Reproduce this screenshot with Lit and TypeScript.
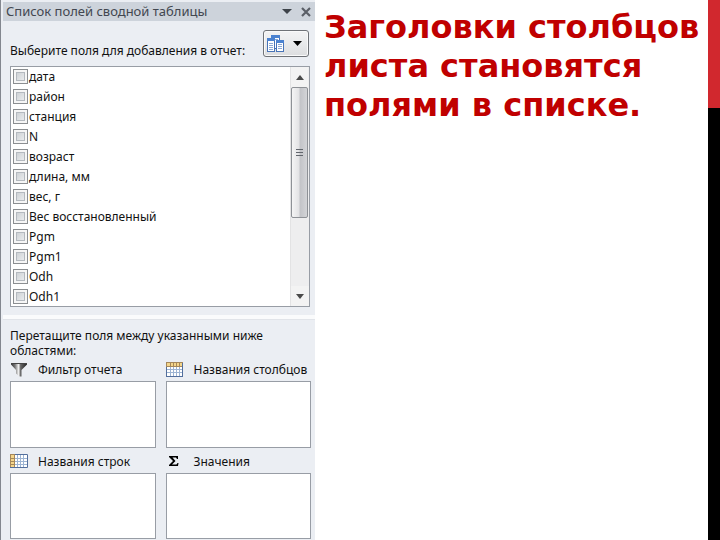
import { LitElement, html, css, svg } from "lit";
import { customElement, property } from "lit/decorators.js";

const fields = [
  "дата", "район", "станция", "N", "возраст", "длина, мм",
  "вес, г", "Вес восстановленный", "Pgm", "Pgm1", "Odh", "Odh1",
];

const areas = [
  { icon: "filter", label: "Фильтр отчета" },
  { icon: "columns", label: "Названия столбцов" },
  { icon: "rows", label: "Названия строк" },
  { icon: "sum", label: "Значения" },
];

const gridLines = svg`<path d="M4.5 1v13M7.5 1v13M10.5 1v13M13.5 1v13M1 4.5h16M1 7.5h16M1 10.5h16" stroke="#9db4d3" fill="none"/>`;

const icons: Record<string, unknown> = {
  filter: html`<svg width="18" height="15" viewBox="0 0 18 15">
    <defs><linearGradient id="f" x1="0" x2="1"><stop offset="0" stop-color="#333"/><stop offset=".25" stop-color="#777"/><stop offset=".48" stop-color="#f4f4f4"/><stop offset=".6" stop-color="#666"/><stop offset="1" stop-color="#222"/></linearGradient></defs>
    <path d="M1 1h16v1.500L11.500 8v6.500H9.500L6 11.500V8L1 2.500z" fill="url(#f)"/>
    <path d="M1 1.500h16" stroke="#444"/></svg>`,
  columns: html`<svg width="18" height="15" viewBox="0 0 18 15">
    <rect width="17" height="15" fill="#fff"/><rect width="17" height="4" fill="#f4d58a"/>${gridLines}
    <path d="M0 .5h17M.5 0v5M4.500 1v3M7.500 1v3M10.500 1v3M13.500 1v3M0 4.500h17" stroke="#a5875a" fill="none"/>
    <path d="M.5 5v10M0 14.500h17M16.500 1v14" stroke="#536f9d" fill="none"/></svg>`,
  rows: html`<svg width="18" height="14" viewBox="0 0 18 14">
    <rect width="18" height="14" fill="#fff"/><rect width="4" height="14" fill="#f4d58a"/>${gridLines}
    <path d="M.5 0v14M4.500 0v14M0 .5h5M1 4.500h3M1 7.500h3M1 10.500h3" stroke="#a5875a" fill="none"/>
    <path d="M5 .5h12.500v13H0" stroke="#536f9d" fill="none"/></svg>`,
  sum: html`<svg width="18" height="14" viewBox="0 0 18 14">
    <path d="M3 2h9v3h-1l-1-1.500H6.500L9.500 7l-3.500 3.500h4.500l1-1.500h1L12 12H3v-1l4-4-4-4z" fill="#000"/></svg>`,
};

@customElement("field-row")
export class FieldRow extends LitElement {
  @property() name = "";
  static styles = css`
    :host { display: block; }
    label { display: flex; box-sizing: border-box; height: 20px; padding-top: 2px; gap: 1px; color: #111; }
    input {
      appearance: none; flex: none; width: 15px; height: 15px; margin: 0;
      border: 1px solid #8b8e91;
      background: linear-gradient(135deg, #c3c8cd, #f4f5f6);
      box-shadow: inset 0 0 0 2px #f6f6f6, inset 0 0 0 3px #b4b9bf;
    }
    input:checked { background: #4f6f9e; }
  `;
  render() {
    return html`<label><input type="checkbox">${this.name}</label>`;
  }
}

@customElement("drop-area")
export class DropArea extends LitElement {
  @property() icon = "";
  @property() label = "";
  static styles = css`
    :host { display: flex; flex-direction: column; }
    .head { display: flex; align-items: center; gap: 10px; height: 23px; white-space: nowrap; }
    .head svg { flex: none; }
    .box { flex: 1; min-height: 64px; border: 1px solid #989da5; background: #fff; }
  `;
  render() {
    return html`<div class="head">${icons[this.icon]}<span>${this.label}</span></div><div class="box"></div>`;
  }
}

@customElement("app-root")
export class AppRoot extends LitElement {
  static styles = css`
    :host {
      display: grid; grid-template-columns: 7fr 9fr; min-height: 100vh;
      background: #fff; color: #111; font: 12px/15px "Noto Sans", sans-serif;
    }
    * { box-sizing: border-box; }
    .panel { display: flex; flex-direction: column; border-left: 1px solid #83878f; background: #ebeef3; }
    .title {
      display: flex; align-items: center; height: 19px; margin: 2px 0 0 2px; padding: 0 0 0 3px;
      background: #cdd3db; color: #424750;
    }
    .title h2 { flex: 1; margin: 0; font-size: 13px; font-weight: 400; white-space: nowrap; }
    button { font: inherit; cursor: pointer; }
    .plain { display: flex; align-items: center; justify-content: center; width: 20px; height: 18px; padding: 0; border: 0; background: none; }
    .plain:last-child { width: 18px; }
    .choose { display: flex; align-items: flex-start; justify-content: space-between; padding: 9px 6px 8px 9px; }
    .choose p { margin: 13px 0 0; white-space: nowrap; }
    .layout {
      display: flex; align-items: center; justify-content: space-between; flex: none; width: 46px; height: 27px; padding: 0 6px 0 3px;
      border: 1px solid #6f7277; border-radius: 3px; background: linear-gradient(#f3f3f4, #e9eaeb 50%, #dcdddf);
      box-shadow: inset 0 0 0 1px #fafafa;
    }
    .list { display: flex; margin: 0 5px 0 9px; border: 1px solid #989da5; background: #fff; }
    .items { flex: 1; height: 239px; overflow: hidden; margin: 0; padding: 0 0 0 2px; list-style: none; }
    .scroll { display: flex; flex-direction: column; width: 19px; padding-right: 1px; background: #eeeeef; border-left: 1px solid #e3e3e4; }
    .scroll button { height: 20px; width: 100%; background: #f3f3f3; }
    .thumb {
      display: flex; align-items: center; justify-content: center; height: 131px;
      border: 1px solid #8e9196; border-radius: 2px; background: linear-gradient(90deg, #f5f5f5, #e3e3e5 45%, #c3c4c8 55%, #d3d4d7);
    }
    .track { flex: 1; }
    .split { height: 5px; margin: 8px 0 0 2px; background: #fafbfc; border-bottom: 1px solid #e1e4e9; }
    .hint { margin: 8px 30px 0 9px; }
    .areas { flex: 1; display: grid; grid-template-columns: 1fr 1fr; gap: 2px 10px; margin: 0 4px 1px 9px; }
    .slide { display: grid; grid-template-columns: 1fr 12px; }
    h1 { margin: 8px 0 0 9px; font: bold 32px/39px "DejaVu Sans", sans-serif; color: #c00000; }
    .stripe { display: grid; grid-template-rows: 1fr 4fr; background: #000; }
    .stripe span { background: #d1282e; }
  `;

  render() {
    return html`
      <section class="panel">
        <header class="title">
          <h2>Список полей сводной таблицы</h2>
          <button class="plain" aria-label="Меню"><svg width="10" height="5"><path d="M0 0h10L5 5z" fill="#3d4249"/></svg></button>
          <button class="plain" aria-label="Закрыть"><svg width="10" height="10" viewBox="0 0 10 10"><path d="M1 1l8 8M9 1L1 9" stroke="#5a5f67" stroke-width="2.200"/></svg></button>
        </header>
        <div class="choose">
          <p>Выберите поля для добавления в отчет:</p>
          <button class="layout" aria-label="Вид списка">
            <svg width="18" height="19" viewBox="0 0 18 19">
              <g fill="#fff" stroke="#4874b8"><rect x="4.500" y="1.500" width="8" height="13"/><rect x=".5" y="4.500" width="7" height="13"/><rect x="9.500" y="6.500" width="7" height="11"/></g>
              <path d="M4 1h9v3H4zM0 4h8v3H0zM9 6h8v3H9z" fill="#4b82d0"/>
              <path d="M2 9.500h4M2 11.500h4M2 13.500h4M2 15.500h4M11 10.500h4M11 12.500h4M11 14.500h4M8 5.500h3" stroke="#8ba9d6"/>
            </svg>
            <svg width="9" height="5"><path d="M0 0h9L4.500 5z" fill="#000"/></svg>
          </button>
        </div>
        <div class="list">
          <ul class="items">${fields.map((f) => html`<li><field-row .name=${f}></field-row></li>`)}</ul>
          <div class="scroll">
            <button class="plain" aria-label="Вверх"><svg width="8" height="5"><path d="M4 0l4 5H0z" fill="#4a4a4a"/></svg></button>
            <div class="thumb"><svg width="8" height="10"><path d="M0 1.500h7M0 4.500h7M0 7.500h7" stroke="#62666d"/></svg></div>
            <div class="track"></div>
            <button class="plain" aria-label="Вниз"><svg width="8" height="5"><path d="M0 0h8L4 5z" fill="#4a4a4a"/></svg></button>
          </div>
        </div>
        <div class="split"></div>
        <p class="hint">Перетащите поля между указанными ниже областями:</p>
        <div class="areas">${areas.map((a) => html`<drop-area .icon=${a.icon} .label=${a.label}></drop-area>`)}</div>
      </section>
      <main class="slide">
        <h1>Заголовки столбцов листа становятся полями в списке.</h1>
        <div class="stripe"><span></span></div>
      </main>
    `;
  }
}
